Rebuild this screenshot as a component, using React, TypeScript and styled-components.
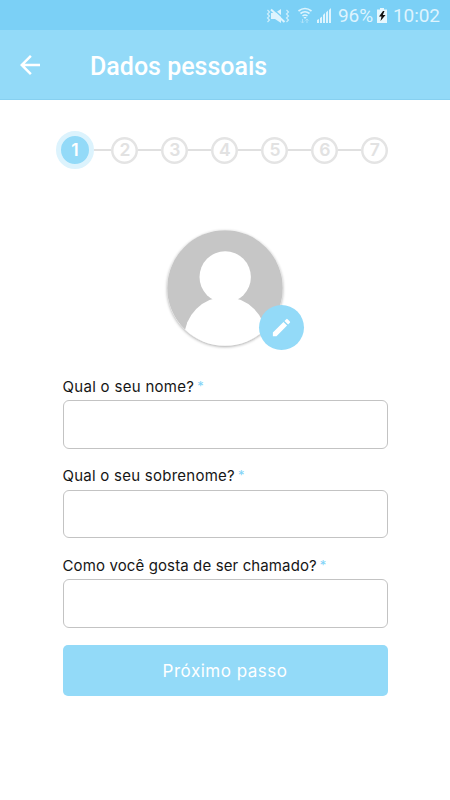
import React from 'react';
import styled, { createGlobalStyle } from 'styled-components';

const GlobalStyle = createGlobalStyle`
  *, *::before, *::after { box-sizing: border-box; }
  body { margin: 0; background: #fff; font-family: Inter, sans-serif; }
`;

const Screen = styled.div`
  width: 450px;
  height: 800px;
  display: flex;
  flex-direction: column;
  background: #fff;
  overflow: hidden;
`;

const StatusBar = styled.div`
  flex: none;
  height: 30px;
  background: #7bd0f6;
  color: #def4fe;
  display: flex;
  align-items: center;
  justify-content: flex-end;
  padding: 2px 10px 0 0;
  font: 400 19px/28px Roboto, sans-serif;
`;

const StatusIcons = styled.svg`
  flex: none;
  width: 70px;
  height: 20px;
  margin-right: 2px;
`;

const Percent = styled.span`
  width: 34px;
  white-space: nowrap;
  letter-spacing: -0.1px;
`;

const BatteryIcon = styled.svg`
  flex: none;
  width: 10px;
  height: 15px;
  margin: 0 6px 1px 5px;
`;

const Clock = styled.span`
  width: 47px;
  white-space: nowrap;
  letter-spacing: -0.1px;
`;

const Header = styled.header`
  flex: none;
  height: 70px;
  background: #93daf8;
  border-bottom: 1px solid #87d0f0;
  display: flex;
  align-items: center;
  padding: 1px 0 0 20px;
`;

const BackButton = styled.button`
  width: 20px;
  height: 20px;
  border: 0;
  padding: 0;
  background: none;
  display: flex;
`;

const Title = styled.h1`
  margin: 3px 0 0 50px;
  color: #fff;
  font: 500 25px/30px Roboto, sans-serif;
`;

const Content = styled.main`
  display: flex;
  flex-direction: column;
  padding: 31px 62px 0 56px;
`;

const Stepper = styled.ol`
  list-style: none;
  margin: 0;
  padding: 0;
  height: 38px;
  display: flex;
  align-items: center;
`;

const Connector = styled.li<{ $first?: boolean }>`
  flex: none;
  width: ${p => (p.$first ? 17.4 : 23)}px;
  height: 2px;
  background: #e0e0e0;
`;

const Step = styled.li<{ $active?: boolean }>`
  flex: none;
  width: ${p => (p.$active ? 38 : 27)}px;
  height: ${p => (p.$active ? 38 : 27)}px;
  border-radius: 50%;
  border: ${p => (p.$active ? '5px solid #dcf3fd' : '0')};
  box-shadow: ${p => (p.$active ? 'none' : 'inset 0 0 0 2.5px #e4e4e4')};
  background: ${p => (p.$active ? '#93daf8' : '#fff')};
  color: ${p => (p.$active ? '#fff' : '#e2e2e2')};
  display: flex;
  align-items: center;
  justify-content: center;
  font-size: 17.5px;
  font-weight: 600;
  line-height: 20px;
`;

const Avatar = styled.div`
  position: relative;
  width: 116px;
  height: 116px;
  margin: 61px 0 0 111px;
  border-radius: 50%;
  box-shadow: 0 1px 3px rgba(0, 0, 0, 0.32);
`;

const EditButton = styled.button`
  position: absolute;
  right: -21px;
  bottom: -4px;
  width: 45px;
  height: 45px;
  padding: 0;
  border: 0;
  border-radius: 50%;
  background: #93daf8;
  display: flex;
  align-items: center;
  justify-content: center;
`;

const Form = styled.form`
  margin: 30.4px 0 0 6.5px;
  width: 325px;
  display: flex;
  flex-direction: column;
`;

const Field = styled.label`
  display: flex;
  flex-direction: column;
  height: 89.3px;
`;

const LabelText = styled.span<{ $spacing: number }>`
  height: 24px;
  padding-top: 0.6px;
  font-size: 15px;
  line-height: 20px;
  letter-spacing: ${p => p.$spacing}px;
  color: #161616;
  white-space: nowrap;
`;

const Required = styled.span`
  color: #7fd3f7;
  font-size: 13px;
  line-height: 1;
  letter-spacing: 0;
  margin-left: -1.5px;
  vertical-align: 1px;
`;

const Input = styled.input`
  width: 100%;
  height: 48.6px;
  border: 1px solid #c3c3c3;
  border-radius: 6px;
  background: #fff;
  padding: 0 12px;
  font: 400 16px Inter, sans-serif;
  outline: none;
`;

const Submit = styled.button`
  height: 51.6px;
  margin-top: 0.6px;
  border: 0;
  border-radius: 5px;
  background: #93daf8;
  color: #fff;
  font: 400 17px/24px Inter, sans-serif;
  letter-spacing: 0.5px;
  padding: 0;
`;

const fields = [
  { label: 'Qual o seu nome?', spacing: 0.3 },
  { label: 'Qual o seu sobrenome?', spacing: 0.25 },
  { label: 'Como você gosta de ser chamado?', spacing: 0.12 },
];

export default function App() {
  return (
    <Screen>
      <GlobalStyle />
      <StatusBar>
        <StatusIcons viewBox="0 0 70 20" fill="none">
          <path d="M5 7h4l6-4v14l-6-4H5z" fill="#def4fe" />
          <path d="M6.500 2.500L20 14.500" stroke="#7bd0f6" strokeWidth="1.500" />
          <path d="M5 3.500L18.500 16" stroke="#def4fe" strokeWidth="2" />
          <path d="M1.500 4l2 2-2 2 2 2-2 2 2 2-2 2M20.500 4l2 2-2 2 2 2-2 2 2 2-2 2" stroke="#cdeefc" strokeWidth="1.200" />
          <path d="M32.500 5q6.500-5 13 0M34.500 7.500q4.500-3.500 9 0M36.500 10q2.500-2 5 0" stroke="#def4fe" strokeWidth="1.600" />
          <path d="M37.300 11h3.400L39 13z" fill="#def4fe" />
          <path d="M36.500 13v4m-1.500-1.500l1.500 1.500 1.500-1.500M41 17v-4m-1.500 1.500L41 13l1.500 1.500" stroke="#aee2fa" />
          <path d="M51 14l2-1v4h-2zM54 12l2-1.500V17h-2zM57 9l2-2v10h-2zM60 6.500l2-2V17h-2zM63 4l2-2v15h-2z" fill="#def4fe" />
        </StatusIcons>
        <Percent>96%</Percent>
        <BatteryIcon viewBox="0 0 10 15">
          <path d="M3 0h4v1.500h3V15H0V1.500h3z" fill="#e6f7fe" />
          <path d="M6 3L2 8.500h2.500l-1 4.500L8.500 7H5.800L7.500 3z" fill="#111" />
        </BatteryIcon>
        <Clock>10:02</Clock>
      </StatusBar>
      <Header>
        <BackButton aria-label="Voltar">
          <svg width="20" height="20" viewBox="4 4 16 16">
            <path fill="#fff" d="M20 11H7.830l5.590-5.590L12 4l-8 8 8 8 1.410-1.410L7.830 13H20v-2z" />
          </svg>
        </BackButton>
        <Title>Dados pessoais</Title>
      </Header>
      <Content>
        <Stepper>
          {[1, 2, 3, 4, 5, 6, 7].map(n => (
            <React.Fragment key={n}>
              {n > 1 && <Connector $first={n === 2} aria-hidden />}
              <Step $active={n === 1}>{n}</Step>
            </React.Fragment>
          ))}
        </Stepper>
        <Avatar>
          <svg width="116" height="116" viewBox="0 0 116 116">
            <defs>
              <clipPath id="disc"><circle cx="58" cy="58" r="57.800" /></clipPath>
            </defs>
            <g clipPath="url(#disc)">
              <rect width="116" height="116" fill="#c6c6c6" />
              <circle cx="58.200" cy="47" r="25.700" fill="#fff" />
              <circle cx="58.200" cy="108" r="41" fill="#fff" />
            </g>
          </svg>
          <EditButton type="button" aria-label="Editar">
            <svg width="23" height="23" viewBox="0 0 24 24">
              <path fill="#fff" d="M3 17.250V21h3.750L17.810 9.940l-3.750-3.750L3 17.250zM20.710 7.040a1 1 0 0 0 0-1.410l-2.340-2.340a1 1 0 0 0-1.410 0l-1.830 1.830 3.750 3.750 1.830-1.830z" />
            </svg>
          </EditButton>
        </Avatar>
        <Form>
          {fields.map(f => (
            <Field key={f.label}>
              <LabelText $spacing={f.spacing}>
                {f.label} <Required>*</Required>
              </LabelText>
              <Input type="text" />
            </Field>
          ))}
          <Submit type="button">Próximo passo</Submit>
        </Form>
      </Content>
    </Screen>
  );
}
